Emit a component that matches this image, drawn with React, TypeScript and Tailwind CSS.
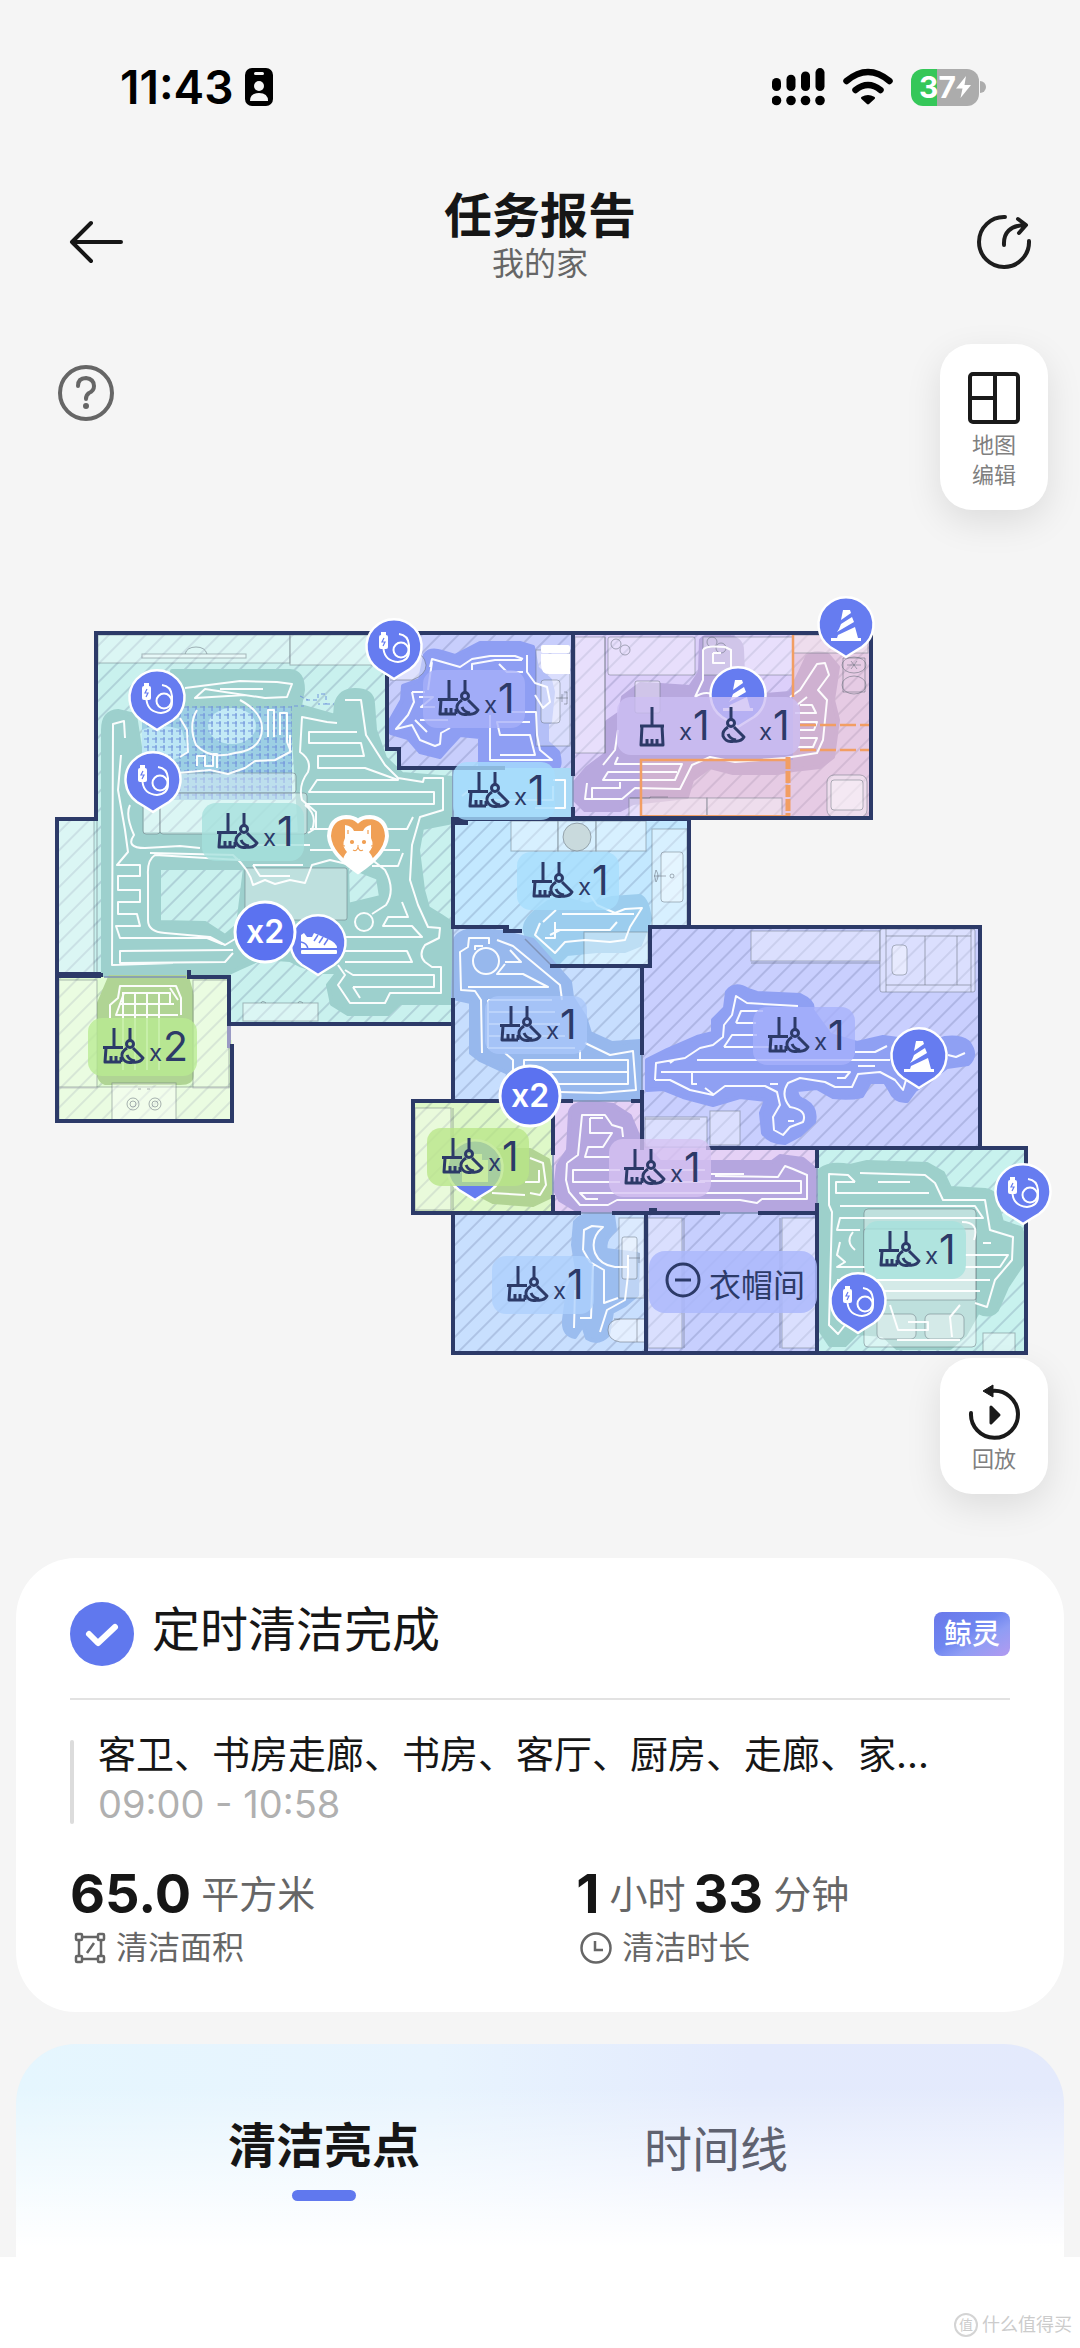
import type { ReactNode } from 'react'

const INK = '#2c3a68'

type Room = {
  id: string
  fill: string
  cover: string
  shape: string
  coverage?: string
  trail?: string
}

/* Floor plan geometry. All rooms share one coordinate space. */
const ROOMS: Room[] = [
  {
    id: 'living',
    fill: '#c9f1ee',
    cover: '#9dd0cd',
    shape: 'M96,633 H387 V749 H399 V768 H453 V1024 H230 V977 H57 V819 H96 Z',
    coverage:
      'M103,975 V730 Q103,712 118,711 L135,715 L142,760 V834 H300 L292,706 H172 V671 H290 Q303,672 303,690 L300,706 L335,716 L336,704 Q340,690 355,690 Q373,690 373,704 L375,730 L385,758 L402,774 L453,778 V822 L422,828 L418,850 L423,890 L428,908 L441,916 L453,924 V1003 H400 L388,1014 H348 L332,1004 L328,985 L338,972 L320,972 L300,965 L290,960 L262,958 L240,968 L225,975 Z M159,868 V922 L205,923 L225,936 L238,925 L245,868 Z M347,866 L378,878 L381,897 L348,905 Z',
    trail:
      'M337,723 L327,722 L302,717 L300,752 Q312,760 308,772 Q298,785 302,800 L316,812 V828 L308,833 M357,732 H309 V743 H361 L364,756 H318 V768 H365 L398,780 H317 L309,792 H434 V804 H305 M413,817 L407,829 H310 M345,700 H361 L366,735 L385,765 L398,778 L423,782 L424,778 H443 V810 L420,817 L412,845 L410,880 L418,905 L428,927 L440,928 L439,938 L425,945 Q418,955 425,962 L432,967 H441 V993 H390 L385,1003 L350,1003 L338,985 L345,975 L338,965 M403,853 L398,866 H372 M402,902 L408,917 H388 L383,926 H412 L422,937 H340 M345,951 H407 L412,962 H345 M345,970 L353,975 H434 V987 H353 M360,998 L353,987 M125,738 L124,721 L113,724 L112,965 L173,963 M121,755 L118,790 L125,830 L128,852 L117,865 H140 V876 H118 V890 H140 V902 H118 V914 L137,914 L140,926 L116,926 L120,938 H207 L222,944 M233,950 L120,951 V963 L225,962 L233,953 M240,860 L155,855 Q147,860 148,875 V920 Q148,932 165,933 L210,937 L225,945 L240,936 M150,853 L233,855 Q250,870 253,885 L265,880 L275,884 L290,880 L305,883 L312,865 L330,860 L355,866 M253,865 L260,876 H290 M253,865 H303 M370,858 L385,870 Q396,890 386,905 L372,914 M355,922 a9,9 0 1 0 18,0 a9,9 0 1 0 -18,0 M185,688 L240,681 L277,682 L292,684 L287,697 L265,698 L205,689 L195,698 L245,695 M220,689 H263 M240,700 Q262,712 262,728 Q262,750 235,753 Q210,760 196,745 Q188,725 197,710 M180,718 L187,730 L188,752 L180,757 M178,773 L210,770 L228,774 L245,768 L255,761 L275,760 L290,752 L290,735 M197,766 v-10 h8 v10 h8 v-12 h4 v14 M268,737 V710 H274 V737 M280,735 V713 H287 V742 L291,752 M130,805 Q125,815 134,835 Q125,848 145,848 L180,846 L200,848 M305,805 Q318,815 312,830 M310,850 H400 M240,845 H310',
  },
  {
    id: 'kitchen-green',
    fill: '#e0fbd2',
    cover: '#b0d494',
    shape: 'M57,977 H230 V1040 H232 V1121 H57 Z',
    coverage: 'M110,977 H187 L192,995 V1075 Q192,1083 180,1083 H105 Q98,1080 99,1070 V1003 Z',
    trail:
      'M110,1018 V1005 L118,998 L120,986 H176 L181,998 V1015 M124,993 L116,1015 H178 M122,993 H170 V1004 M120,1004 H174 M123,993 V1070 M135,993 V1070 M147,993 V1070 M159,993 V1070 M170,988 L178,1000',
  },
  {
    id: 'bath',
    fill: '#c8cefc',
    cover: '#8e9ef3',
    shape: 'M387,633 H573 V768 H399 V749 H387 Z',
    coverage:
      'M425,655 Q430,648 442,652 L455,656 L480,643 H520 L533,647 L537,668 L550,680 L553,692 L550,722 H547 V742 L558,752 Q562,768 556,768 H480 V737 L460,735 L448,748 L440,757 L420,752 L408,738 L391,733 L390,721 L402,700 L403,686 L420,680 Z',
    trail:
      'M430,667 L432,659 L460,667 L472,659 L490,656 H515 L523,659 M472,670 V664 L495,660 H522 M432,662 L428,690 M412,692 L414,702 L408,715 L396,729 L412,725 L420,740 L435,746 L440,744 L441,733 L450,728 M425,692 H412 M415,720 L427,732 M419,697 h14 l-12,10 h14 M490,715 V760 H552 L540,750 L537,735 L536,712 H510 M530,722 H497 L500,735 H530 L535,755 H500 M527,655 V672 L535,683 L547,687 L550,702 L543,708 L535,695 M523,672 h-16 l-8,-8 M420,720 h28',
  },
  {
    id: 'hall',
    fill: '#a9d9f6',
    cover: '#9ccfee',
    shape: 'M453,768 H573 V819 H453 Z',
    trail: 'M553,780 H565 V808 H535 M553,786 V800 H480 M462,796 l8,-6',
  },
  {
    id: 'study',
    fill: '#dccffa',
    cover: '#b8a8de',
    shape: 'M573,633 H871 V818 H573 Z',
    coverage:
      'M575,800 V782 L587,768 L607,753 V722 L620,713 L623,697 L640,684 L660,685 L690,687 L700,672 L701,640 Q705,634 725,636 Q742,638 742,650 L743,673 L765,695 L790,693 L800,672 L807,657 Q815,650 828,655 L838,667 L833,700 L838,720 L833,757 L820,767 L793,770 L777,773 H733 L710,767 L692,780 L687,797 L633,803 L620,810 H585 Z',
    trail:
      'M618,730 L615,750 L603,765 M618,757 L615,764 H682 L675,780 H603 L608,772 H677 M620,782 V788 H592 V799 H622 L635,788 L680,789 L692,765 L710,757 L735,762 L785,758 L817,753 L823,740 L827,700 L818,690 L829,675 L825,663 L817,664 L800,690 L790,697 M587,783 L585,799 H592 M797,705 L807,697 M800,705 H812 L816,713 H795 M800,722 H817 L814,730 H800 M800,738 H817 L813,747 H798 M695,697 L703,680 V650 Q705,645 725,647 L731,650 V668 M713,653 v10 h12 M713,653 h8 M695,697 Q705,690 715,695',
  },
  {
    id: 'balcony',
    fill: '#c3e8ff',
    cover: '#9ccdee',
    shape: 'M453,819 H689 V927 H650 V966 H552 L522,935 V931 H505 V927 H453 Z',
    coverage:
      'M527,936 Q520,925 535,912 L548,902 L562,898 L587,905 L612,898 L640,896 Q648,900 650,920 L640,945 L625,951 L597,951 L567,954 L557,964 L548,962 Z',
    trail:
      'M540,923 L535,935 L555,953 L565,942 L585,940 L610,942 L625,940 L630,927 L642,908 L625,909 L615,913 L597,905 L590,895 M562,914 H634 M556,930 H610 L617,922 M556,910 L543,922 M555,922 V938 h-10 M560,930 L550,935',
  },
  {
    id: 'corridor',
    fill: '#c7defe',
    cover: '#97b8ed',
    shape: 'M453,927 H505 V931 H522 V935 L552,966 H642 V1101 H453 Z',
    coverage:
      'M455,940 Q458,931 475,930 L503,932 L533,940 L555,965 L570,982 L572,997 L585,1017 L590,1033 L612,1043 L641,1041 V1099 H505 L508,1073 L480,1060 L471,1053 V1002 L453,998 Z',
    trail:
      'M489,944 V938 H469 L468,947 L460,952 L461,990 L475,991 L481,1000 L482,1053 M475,950 v-4 h8 M497,940 L513,946 L530,960 L560,985 L562,1000 M473,961 a13,13 0 1 0 26,0 a13,13 0 1 0 -26,0 M510,950 L521,962 H505 M505,964 L497,974 H523 L548,987 H468 M585,1043 L610,1055 L633,1051 L636,1090 L612,1092 L600,1093 L560,1092 M524,1068 V1060 H628 V1084 H555 M524,1072 H628 M580,1050 V1060 M505,1053 L513,1060 V1070 M488,1000 H552 M488,1012 H555 M488,1024 H560 M488,1036 H565 M488,1048 H575 M488,1000 V1048',
  },
  {
    id: 'bedroom',
    fill: '#c9cffe',
    cover: '#8fa0f3',
    shape: 'M650,927 H980 V1148 H642 V966 H650 Z',
    coverage:
      'M647,1060 L667,1050 L697,1037 L713,1033 V1020 L725,1008 L727,992 Q735,982 748,990 L757,993 L800,995 Q815,1002 812,1010 L830,1035 L857,1043 L883,1037 L930,1043 L945,1038 Q960,1036 968,1042 Q978,1055 968,1064 L947,1067 L930,1080 L915,1090 L907,1101 Q895,1102 890,1090 L885,1082 H870 L862,1096 Q850,1099 833,1097 L817,1088 L797,1090 Q795,1098 805,1101 Q817,1108 814,1122 L800,1135 L785,1143 Q770,1143 763,1133 L761,1113 L766,1100 L740,1097 L713,1105 L683,1097 L663,1089 L647,1090 Z',
    trail:
      'M655,1080 L656,1063 L685,1058 L700,1048 L713,1045 L723,1037 L724,1025 L732,1015 L736,996 L747,1003 L798,1006 M655,1080 H670 L690,1090 L713,1095 L725,1086 L765,1086 L777,1092 L780,1105 L773,1117 L774,1130 L783,1135 L790,1127 L803,1122 Q808,1110 790,1107 Q780,1095 788,1083 L800,1078 L825,1082 L835,1087 L852,1087 L858,1074 L880,1072 L895,1080 L903,1090 L906,1080 M661,1072 H850 L845,1078 h-8 M697,1060 H890 M692,1073 V1084 h5 M705,1088 l8,6 M736,1023 l5,-12 h22 M736,1023 h20 M724,1047 l8,-12 h25 M724,1047 h50 M855,1052 h20 l12,-6 M858,1066 h17 M948,1055 l8,2 l9,-4 M770,1084 h8 M788,1121 h6 M670,1063 l4,-3',
  },
  {
    id: 'guest-bath',
    fill: '#def8c8',
    cover: '#b2d494',
    shape: 'M413,1101 H553 V1213 H413 Z',
    coverage: 'M480,1150 H530 L548,1160 L552,1180 V1196 L533,1205 L493,1202 L470,1190 Z',
    trail: 'M530,1158 L543,1163 L546,1185 L540,1195 L530,1193 M539,1170 V1182 H525 M492,1193 L525,1195',
  },
  {
    id: 'aisle',
    fill: '#e5d1f6',
    cover: '#b5a6df',
    shape: 'M553,1101 H642 V1148 H817 V1213 H553 Z',
    coverage:
      'M570,1112 Q572,1103 590,1102 L613,1105 L630,1116 L640,1140 L660,1162 H772 L780,1156 L803,1159 L814,1168 V1212 H580 L560,1200 L555,1190 L558,1165 L568,1150 Z',
    trail:
      'M567,1163 L578,1155 L582,1115 H605 L612,1125 L622,1128 L623,1137 M567,1163 L566,1180 L569,1192 L580,1205 H608 L617,1200 H740 L757,1203 L762,1199 H807 V1175 L793,1169 L785,1166 L778,1177 L715,1176 M590,1118 V1133 H603 L612,1133 L603,1147 H588 L585,1157 H610 M590,1118 H603 M620,1170 H573 V1182 H620 M700,1181 H801 V1193 H580 L586,1199 h12 M711,1174 h33 M640,1182 H705 M640,1170 H705',
  },
  {
    id: 'main-bath',
    fill: '#c8dffe',
    cover: '#9bbdef',
    shape: 'M453,1213 H646 V1353 H453 Z',
    coverage:
      'M575,1222 Q580,1215 590,1215 H613 L615,1230 Q603,1240 606,1250 L638,1254 L637,1295 L625,1305 L612,1312 L608,1335 Q598,1345 587,1338 L583,1325 L575,1337 Q563,1335 564,1320 L568,1290 L577,1270 L573,1245 Z',
    trail:
      'M583,1250 L584,1230 L592,1226 L603,1227 Q590,1238 595,1253 Q600,1265 615,1267 H628 M583,1250 L590,1262 L604,1270 V1303 L618,1298 M628,1255 V1275 L625,1300 L607,1310 L600,1332 M575,1290 L574,1328 M580,1318 h11 l2,-55',
  },
  {
    id: 'closet',
    fill: '#c7cffe',
    cover: '#8fa0f3',
    shape: 'M646,1213 H817 V1353 H646 Z',
  },
  {
    id: 'master',
    fill: '#c8f2ee',
    cover: '#9dd0cb',
    shape: 'M817,1148 H1026 V1353 H817 Z',
    coverage:
      'M820,1170 Q830,1162 850,1166 L867,1162 L927,1164 L943,1173 L950,1188 L985,1190 Q998,1192 998,1208 L1002,1222 L1020,1228 Q1026,1235 1023,1263 L1007,1287 L997,1310 Q990,1318 978,1312 L965,1335 L950,1348 H897 L883,1335 L857,1333 L845,1345 H830 L820,1330 Z',
    trail:
      'M855,1182 L848,1175 L829,1174 V1205 L832,1212 L829,1325 L838,1334 L845,1325 M860,1173 L925,1175 L935,1183 L943,1200 L985,1200 L990,1230 L1013,1237 L1012,1260 L995,1280 L987,1307 L975,1303 M855,1182 H836 V1193 H929 M878,1182 H910 M840,1206 H975 L983,1218 H840 L837,1230 H860 M840,1242 L837,1255 L845,1262 L837,1267 H865 M983,1243 h8 M965,1255 H1008 L1000,1267 H965 M837,1280 H990 M880,1291 H980 M853,1232 q-8,10 2,18 M962,1222 q18,0 12,18 M890,1305 l8,25 h30 v-8 h-20 M960,1305 l-10,12 2,20 M897,1340 H960',
  },
]

/* Furniture outlines: x, y, width, height, radius */
const FURNITURE: [number, number, number, number, number][] = [
  [98, 635, 192, 28, 0],
  [290, 635, 96, 30, 0],
  [142, 654, 104, 4, 0],
  [57, 820, 37, 153, 0],
  [143, 773, 153, 20, 3],
  [143, 793, 17, 41, 3],
  [160, 793, 147, 41, 3],
  [245, 868, 102, 52, 2],
  [243, 1003, 75, 18, 0],
  [59, 980, 38, 108, 0],
  [193, 980, 36, 108, 0],
  [59, 1087, 172, 33, 0],
  [112, 1083, 64, 37, 0],
  [536, 650, 34, 96, 0],
  [541, 680, 19, 43, 3],
  [575, 637, 30, 116, 0],
  [608, 637, 87, 38, 2],
  [703, 637, 90, 38, 0],
  [635, 681, 25, 32, 2],
  [629, 798, 78, 19, 0],
  [707, 798, 75, 19, 0],
  [793, 635, 75, 18, 0],
  [827, 775, 40, 42, 7],
  [831, 780, 32, 30, 3],
  [511, 821, 47, 30, 0],
  [558, 821, 38, 30, 0],
  [596, 821, 50, 30, 0],
  [652, 829, 35, 97, 0],
  [661, 852, 22, 50, 3],
  [584, 932, 64, 33, 0],
  [751, 931, 129, 30, 0],
  [880, 929, 95, 63, 2],
  [892, 945, 15, 30, 4],
  [645, 1117, 62, 30, 0],
  [710, 1111, 30, 34, 0],
  [415, 1108, 36, 102, 0],
  [619, 1218, 25, 80, 0],
  [622, 1237, 15, 42, 2],
  [648, 1218, 34, 130, 0],
  [782, 1218, 34, 130, 0],
  [864, 1209, 112, 138, 4],
  [864, 1229, 112, 71, 2],
  [877, 1314, 39, 25, 5],
  [925, 1314, 39, 25, 5],
  [983, 1333, 32, 19, 0],
]

const WALLS =
  'M96,633 H871 V818 H573 M96,633 V819 H57 V1121 H232 V1046 M229,1022 V977 H189 V972 M57,975 H101 M229,1024 H453 M387,677 V749 H399 V768 H453 M453,768 H503 M453,819 V927 M453,1000 V1101 M453,819 H573 M573,633 V774 M573,809 V818 M573,819 H689 V927 M453,927 H507 M505,931 H520 M552,966 H650 V927 H980 V1148 M642,966 V1053 M642,1092 V1148 M413,1101 H571 M633,1101 H642 M413,1101 V1213 H579 M553,1110 V1153 M553,1197 V1213 M614,1213 H718 M760,1213 H817 M708,1148 H1026 V1353 H453 V1213 M646,1213 V1353 M817,1148 V1166 M817,1205 V1353'

const DOORS =
  'M525,939 L552,966 M453,768 V819 M453,927 V1000 M573,774 V809 M642,1053 V1092 M571,1101 H633 M553,1153 V1197 M579,1213 H614 M718,1213 H760 M817,1166 V1205 M104,977 H186'

type LabelKind = 'both' | 'split'
type MapLabel = { x: number; y: number; count: number; fill: string; kind?: LabelKind }

const LABELS: MapLabel[] = [
  { x: 202, y: 803, count: 1, fill: '#a5e0dc' },
  { x: 88, y: 1018, count: 2, fill: '#b9ea92' },
  { x: 423, y: 670, count: 1, fill: '#a6aff8' },
  { x: 453, y: 762, count: 1, fill: '#a6dcfc' },
  { x: 617, y: 697, count: 1, fill: '#cdbff3', kind: 'split' },
  { x: 517, y: 852, count: 1, fill: '#a6defd' },
  { x: 485, y: 996, count: 1, fill: '#a9c6fa' },
  { x: 753, y: 1007, count: 1, fill: '#a6b1fb' },
  { x: 609, y: 1139, count: 1, fill: '#d6c3f2' },
  { x: 427, y: 1128, count: 1, fill: '#b8e688' },
  { x: 492, y: 1256, count: 1, fill: '#add0fd' },
  { x: 864, y: 1221, count: 1, fill: '#a5e2dd' },
]

type PinKind = 'cable' | 'cone' | 'shoe' | 'scale'
type MapPin = { x: number; y: number; kind: PinKind }

// Pins that sit beneath a room label
const BURIED_PINS: MapPin[] = [
  { x: 738, y: 695, kind: 'cone' },
  { x: 475, y: 1168, kind: 'scale' },
]

const PINS: MapPin[] = [
  { x: 157, y: 698, kind: 'cable' },
  { x: 153, y: 780, kind: 'cable' },
  { x: 394, y: 647, kind: 'cable' },
  { x: 846, y: 625, kind: 'cone' },
  { x: 318, y: 943, kind: 'shoe' },
  { x: 919, y: 1056, kind: 'cone' },
  { x: 1023, y: 1192, kind: 'cable' },
  { x: 858, y: 1301, kind: 'cable' },
]

export default function App() {
  return (
    <div className="w-full bg-white font-['Inter','Noto_Sans_CJK_SC',sans-serif] text-[#161616]">
      <div className="bg-[#f5f5f5]">
        <StatusBar />
        <Header />
        <MapSection />
        <main className="flex flex-col gap-8 px-4 pt-16">
          <SummaryCard />
          <HighlightsCard />
        </main>
      </div>
      <footer className="flex items-center justify-end gap-1 px-2 pt-14 pb-4 text-[#cccccc]">
        <span className="flex size-6 items-center justify-center rounded-full border-2 border-[#d4d4d4] text-sm leading-none">值</span>
        <span className="text-lg leading-6">什么值得买</span>
      </footer>
    </div>
  )
}

function StatusBar() {
  return (
    <div className="flex h-[174px] items-center justify-between pr-[94px] pl-[120px] text-black">
      <div className="flex items-center gap-3">
        <span className="text-[46px] leading-none font-semibold">11:43</span>
        <svg width="28" height="38" viewBox="0 0 28 38">
          <rect width="28" height="38" rx="7" fill="#000" />
          <rect x="9" y="4" width="10" height="3" rx="1.5" fill="#f5f5f5" />
          <circle cx="14" cy="18" r="5" fill="#f5f5f5" />
          <path d="M5,33 Q5,25 14,25 Q23,25 23,33 Z" fill="#f5f5f5" />
        </svg>
      </div>
      <div className="flex items-center gap-[18px]">
        <svg width="53" height="38" viewBox="0 0 53 38">
          {[0, 1, 2, 3].map((i) => (
            <g key={i}>
              <rect x={i * 14.5} y={10 - i * 3.3} width="9" height={13 + i * 3.3} rx="4.5" />
              <circle cx={i * 14.5 + 4.5} cy="32.5" r="4.8" />
            </g>
          ))}
        </svg>
        <svg width="50" height="38" viewBox="0 0 50 38" fill="none" stroke="#000" strokeLinecap="round">
          <path d="M3.5,13 Q25,-5 46.5,13" strokeWidth="6.5" />
          <path d="M12.5,22 Q25,12 37.5,22" strokeWidth="6.5" />
          <path d="M19.5,30 Q25,27 30.5,30 L25,35 Z" fill="#000" strokeWidth="3" strokeLinejoin="round" />
        </svg>
        <div className="flex items-center gap-px">
          <div className="flex h-[37px] w-[68px] items-center justify-center rounded-xl bg-[linear-gradient(90deg,#35c759_38%,#acacac_38%)] text-white">
            <span className="text-3xl leading-none font-bold">37</span>
            <svg width="15" height="22" viewBox="0 0 15 22">
              <path d="M10,0 L0,12.5 H6.5 L4.5,22 L15,9 H8.5 Z" fill="#fff" />
            </svg>
          </div>
          <div className="h-3 w-1.5 rounded-r-full bg-[#acacac]" />
        </div>
      </div>
    </div>
  )
}

function Header() {
  return (
    <header className="grid h-[136px] grid-cols-[1fr_auto_1fr] items-center px-12">
      <button type="button" aria-label="返回" className="justify-self-start pl-5">
        <svg width="56" height="44" viewBox="0 0 56 44" fill="none" stroke="#161616" strokeWidth="4" strokeLinecap="round" strokeLinejoin="round">
          <path d="M23,3 L4,22 L23,41 M4,22 H53" />
        </svg>
      </button>
      <div className="flex flex-col items-center pb-3 text-center">
        <h1 className="text-5xl leading-[56px] font-bold">任务报告</h1>
        <p className="text-[32px] leading-10 text-[#666]">我的家</p>
      </div>
      <button type="button" aria-label="分享" className="justify-self-end">
        <svg width="56" height="56" viewBox="0 0 56 56" fill="none" stroke="#1d1d1d" strokeWidth="4" strokeLinecap="round" strokeLinejoin="round">
          <path d="M29,3 A25,25 0 1 0 53,27" />
          <path d="M28,31 Q27,12 49,11 M42,5 L50,11 L43,19" />
        </svg>
      </button>
    </header>
  )
}

function MapSection() {
  return (
    <section className="pt-[34px]">
      <div className="flex items-start justify-between pr-8 pl-14">
        <button type="button" aria-label="帮助" className="mt-5">
          <svg width="60" height="60" viewBox="0 0 60 60" fill="none" stroke="#666" strokeLinecap="round">
            <circle cx="30" cy="29" r="26" strokeWidth="4" />
            <path d="M22,22 Q22,14 30,14 Q38,15 38,22 Q38,27 33,29 Q30,31 30,35" strokeWidth="4" />
            <circle cx="30" cy="42" r="3" fill="#666" stroke="none" />
          </svg>
        </button>
        <FloatingButton label="地图编辑">
          <svg width="52" height="52" viewBox="0 0 52 52" fill="none" stroke="#1a1a1a" strokeWidth="4">
            <rect x="2" y="2" width="48" height="48" rx="3" />
            <path d="M27,2 V50 M2,26 H27" />
          </svg>
        </FloatingButton>
      </div>
      <FloorPlan />
      <div className="flex justify-end pr-8">
        <FloatingButton label="回放">
          <svg width="52" height="52" viewBox="0 2 52 52" fill="none" stroke="#1a1a1a" className="overflow-visible">
            <path d="M3,29 A23.5,23.5 0 1 0 24,7" strokeWidth="4" strokeLinecap="round" />
            <path d="M15,7 L25,1 V13 Z" fill="#1a1a1a" strokeWidth="1" strokeLinejoin="round" />
            <path d="M23,23 L31,31 L23,39 Z" fill="#1a1a1a" strokeWidth="3" strokeLinejoin="round" />
          </svg>
        </FloatingButton>
      </div>
    </section>
  )
}

function FloatingButton({ label, children }: { label: string; children: ReactNode }) {
  return (
    <button
      type="button"
      className="flex w-[108px] flex-col items-center gap-1.5 rounded-[32px] bg-white px-8 pt-7 pb-5 shadow-[0_12px_36px_rgba(0,0,0,0.1)]"
    >
      {children}
      <span className="w-11 text-[22px] leading-[30px] text-[#808080]">{label}</span>
    </button>
  )
}

// ── Floor plan ─────────────────────────────────────────────────────────────

function FloorPlan() {
  return (
    <svg viewBox="0 510 1080 848" className="block w-full" role="img" aria-label="清洁地图">
      <defs>
        <pattern id="hatch" width="13" height="13" patternUnits="userSpaceOnUse" patternTransform="rotate(45)">
          <path d="M6,0 V13" stroke={INK} strokeOpacity="0.26" strokeWidth="1.3" />
        </pattern>
        <pattern id="rug" width="8" height="8" patternUnits="userSpaceOnUse">
          <path d="M0,3 H5 M4,1 V7" stroke="#7396dc" strokeWidth="1.2" fill="none" />
        </pattern>
      </defs>

      {ROOMS.map((room) => (
        <g key={room.id}>
          <path d={room.shape} fill={room.fill} />
          {room.id !== 'hall' && <path d={room.shape} fill="url(#hatch)" />}
          {room.id === 'living' && <path d="M142,706 H292 V800 H142 Z" fill="#9ccfe4" />}
          {room.coverage && (
            <path d={room.coverage} fill={room.cover} fillRule="evenodd" stroke={room.cover} strokeWidth="4" strokeLinejoin="round" />
          )}
        </g>
      ))}

      {/* carpet */}
      <path d="M142,730 Q160,722 182,730 L188,752 L170,762 H142 Z" fill="#bce6f5" />
      <ellipse cx="232" cy="726" rx="24" ry="18" fill="#c3eaf6" />
      <path d="M142,706 H292 V800 H142 Z" fill="url(#rug)" />
      <path d="M300,696 l8,4 M306,700 h12 v-6 h8 v10 h-8 M326,704 h8 M294,706 h10" stroke="#7396dc" fill="none" strokeDasharray="4 3" />

      {/* restricted zones */}
      <path d="M793,635 H869 V816 H788 V760 H793 Z M641,760 H788 V816 H641 Z" fill="#f9c4bb" fillOpacity="0.35" />

      {FURNITURE.map(([x, y, w, h, r]) => (
        <rect key={`${x}-${y}`} x={x} y={y} width={w} height={h} rx={r} fill="#fff" fillOpacity="0.34" stroke="#5c6672" strokeOpacity="0.45" />
      ))}
      <FurnitureDetails />

      {ROOMS.map((room) => (
        <path key={room.id} d={room.trail} fill="none" stroke="#fff" strokeOpacity="0.95" strokeWidth="2" strokeLinejoin="round" />
      ))}

      <g fill="none" stroke="#f29e63" strokeWidth="2.5">
        <path d="M793,635 V697" />
        <path d="M800,725 H869 M800,750 H869" strokeDasharray="16 4" />
        <path d="M641,816 V760 H786" />
        <path d="M641,816 H788" strokeWidth="2" />
        <path d="M788,757 V816" strokeWidth="5" strokeDasharray="12 2" />
      </g>

      <path d={DOORS} fill="none" stroke="#7f93b8" strokeWidth="1.5" />
      <path d="M229,1020 V1048" stroke="#9a9ac4" strokeWidth="4" />
      <path d={WALLS} fill="none" stroke={INK} strokeWidth="4" strokeLinecap="square" />
      <path d="M57,975 H101 M453,822 H468" stroke={INK} strokeWidth="6" />
      <rect x="649" y="1208" width="8" height="6" fill={INK} />

      {BURIED_PINS.map((pin) => (
        <Pin key={`${pin.x}-${pin.y}`} {...pin} />
      ))}
      {LABELS.map((label) => (
        <CountLabel key={`${label.x}-${label.y}`} {...label} />
      ))}

      {/* skipped room */}
      <rect x="649" y="1251" width="168" height="62" rx="16" fill="#acb8fb" fillOpacity="0.85" />
      <circle cx="683" cy="1280" r="16" fill="none" stroke={INK} strokeWidth="3" />
      <path d="M675,1280 H691" stroke={INK} strokeWidth="3" />
      <text x="709" y="1297" fontSize="32" fill={INK}>衣帽间</text>

      {PINS.map((pin) => (
        <Pin key={`${pin.x}-${pin.y}`} {...pin} />
      ))}
      <CatPin x={358} y={840} />
      <RepeatBadge x={265} y={932} />
      <RepeatBadge x={530} y={1096} />
    </svg>
  )
}

function FurnitureDetails() {
  return (
    <g fill="none" stroke="#5c6672" strokeOpacity="0.5">
      <path d="M185,654 q2,-7 11,-7 q9,0 11,7" />
      <circle cx="133" cy="1104" r="6" />
      <circle cx="155" cy="1104" r="6" />
      <circle cx="133" cy="1104" r="3" />
      <circle cx="155" cy="1104" r="3" />
      <path d="M138,1089 h3 M147,1089 h3 M261,1003 q1,-3 5,0 M298,1003 q1,-3 5,0" />
      {/* toilets and basins */}
      <rect x="541" y="645" width="29" height="8" rx="2" fill="#fff" stroke="none" />
      <path d="M541,654 H570 V674 H549 Q541,674 541,664 Z" fill="#fff" stroke="none" />
      <path d="M556,698 h12 M562,694 v8 M564,692 h3 v12 h-3" />
      <path d="M654,876 h12 M656,870 q4,6 0,12 q-3,-6 0,-12" />
      <circle cx="672" cy="876" r="2" />
      <path d="M628,1258 h12 M639,1253 v10" />
      <path d="M614,1319 H646 V1342 H620 Q608,1340 608,1330 Q608,1320 620,1319 M637,1319 V1342" fill="#fff" fillOpacity="0.5" />
      <circle cx="577" cy="837" r="14" fill="#c9dadd" />
      {/* stools and chairs */}
      <circle cx="616" cy="644" r="5" />
      <circle cx="625" cy="650" r="5" />
      <circle cx="712" cy="642" r="5" />
      <circle cx="721" cy="648" r="5" />
      <ellipse cx="854" cy="665" rx="12" ry="8" />
      <ellipse cx="854" cy="685" rx="12" ry="9" />
      <path d="M843,658 h22 v34 h-22 Z M847,665 h14 M851,661 l6,8 M857,661 l-6,8" />
      <path d="M605,637 V753 M630,798 h20 v-1 h18 M886,929 V992 M971,929 V992 M886,936 H971 M886,985 H971 M925,936 V985 M957,936 V985" />
      <path d="M453,1108 V1210 M684,1218 V1348 M780,1218 V1348 M751,963 H880 M645,1119 H700 M97,820 V973" />
      <path d="M390,680 h22 q14,-5 14,-15 q-2,-12 -12,-12" fill="#fff" fillOpacity="0.4" />
    </g>
  )
}

function CountLabel({ x, y, count, fill, kind = 'both' }: MapLabel) {
  if (kind === 'split') {
    return (
      <g transform={`translate(${x} ${y})`}>
        <rect width="183" height="58" rx="14" fill={fill} fillOpacity="0.78" />
        <g transform="translate(22 10)" fill="none" stroke={INK} strokeWidth="3" strokeLinejoin="round">
          <path d="M13,0 V19 M1,19 H25 M3,19 L2,38 H24 L23,19 M8,38 V32 M13,38 V32 M18,38 V32" />
        </g>
        <Times x={62} count={count} />
        <g transform="translate(87 10)">
          <Duster />
        </g>
        <Times x={142} count={count} />
      </g>
    )
  }
  return (
    <g transform={`translate(${x} ${y})`}>
      <rect width={count > 1 ? 109 : 102} height="58" rx="14" fill={fill} fillOpacity="0.78" />
      <g transform="translate(15 10)">
        <path d="M11,0 V19 M0,19.5 H20 M3,20 L2,34 H18 M8,34 V28 M13,34 V28 M18,34 V29" fill="none" stroke={INK} strokeWidth="3" strokeLinejoin="round" />
        <Duster />
      </g>
      <Times x={61} count={count} />
    </g>
  )
}

/* Mop head, shares its origin with the broom it stands beside */
function Duster() {
  return (
    <g fill="none" stroke={INK} strokeWidth="3" strokeLinejoin="round">
      <path d="M27,0 V12" />
      <circle cx="27" cy="16" r="3.5" />
      <path d="M24,20 Q18,24 19,29 Q22,36 30,34 Q37,35 40,30 L30,20 M24,27 Q26,32 32,33" />
    </g>
  )
}

function Times({ x, count }: { x: number; count: number }) {
  return (
    <g fill={INK}>
      <text x={x} y="43" fontSize="24">x</text>
      <text x={x + 14} y="43" fontSize="41">{count}</text>
    </g>
  )
}

function Pin({ x, y, kind }: MapPin) {
  return (
    <g transform={`translate(${x} ${y})`}>
      <path
        d="M0,32 Q-6,28 -16,22 A27.5,27.5 0 1 1 16,22 Q6,28 0,32 Z"
        fill="#667cf0"
        stroke="#fff"
        strokeWidth="2.5"
        strokeLinejoin="round"
      />
      <PinGlyph kind={kind} />
    </g>
  )
}

function PinGlyph({ kind }: { kind: PinKind }) {
  if (kind === 'cable') {
    return (
      <g fill="none" stroke="#fff" strokeWidth="2">
        <rect x="-15" y="-12" width="9" height="14" rx="2" fill="#fff" stroke="none" />
        <rect x="-13" y="-15" width="5" height="4" fill="#fff" stroke="none" />
        <path d="M-10,-9 l-2,4 h3 l-2,4" stroke="#667cf0" strokeWidth="1.2" />
        <path d="M-10.5,2 Q-9,14 4,15 Q15,14 15,4 V-2 Q14,-12 5,-13" />
        <circle cx="7" cy="3" r="7.5" />
      </g>
    )
  }
  if (kind === 'cone') {
    return (
      <g fill="#fff">
        <path d="M-15,13 H-9 L-8,10 L9,2 L12,13 H15 V16 H-15 Z" />
        <path d="M-7,4 L-5,-1 L6,-8 L8,-3 L-9,7 Z" />
        <path d="M-3,-15 H4 L5,-12 L-5,-5 Z" />
      </g>
    )
  }
  if (kind === 'shoe') {
    return (
      <g fill="#fff">
        <path d="M-17,-8 L-14,-10 L-11,-6 H-6 L-4,-10 L10,-4 Q19,0 19,5 H-17 Z" />
        <rect x="-17" y="7" width="36" height="4" rx="1" />
        <path d="M0,-8 l-4,6 M5,-6 l-4,6 M10,-4 l-4,6" stroke="#667cf0" strokeWidth="1.5" />
        <path d="M-17,-1 q6,1 7,7" stroke="#667cf0" strokeWidth="1.5" fill="none" />
      </g>
    )
  }
  return <path d="M-13,-8 H-7 V-14 H7 V-8 H13 V14 H-13 Z" fill="#fff" />
}

function CatPin({ x, y }: { x: number; y: number }) {
  return (
    <g transform={`translate(${x} ${y})`}>
      <path
        d="M0,32 Q-28,14 -29,-4 Q-28,-22 -12,-23 Q-4,-23 0,-19 Q4,-23 12,-23 Q28,-22 29,-4 Q28,14 0,32 Z"
        fill="#f0a055"
        stroke="#fff"
        strokeWidth="4"
      />
      <path d="M-13,-2 V-15 Q-6,-14 -4,-9 H5 Q7,-14 13,-15 V-2 Q17,6 11,12 Q16,18 15,22 L0,31 L-15,22 Q-15,16 -11,12 Q-17,6 -13,-2 Z" fill="#fff" />
      <g stroke="#f0a055" fill="#f0a055" strokeWidth="1.2">
        <circle cx="-6" cy="2" r="1.5" />
        <circle cx="6" cy="2" r="1.5" />
        <path d="M-5,10 Q-1,12 0,7 Q1,12 5,10" fill="none" />
        <path d="M-1,6 H1 M-20,5 L-13,6 M-19,11 L-13,9 M20,5 L13,6 M19,11 L13,9 M-10,-10 v4 M10,-10 v4" />
      </g>
    </g>
  )
}

function RepeatBadge({ x, y }: { x: number; y: number }) {
  return (
    <g transform={`translate(${x} ${y})`}>
      <circle r="30" fill="#5b72f0" stroke="#fff" strokeWidth="3" />
      <text y="11" textAnchor="middle" fontSize="32" fontWeight="600" fill="#fff">x2</text>
    </g>
  )
}

// ── Cards ──────────────────────────────────────────────────────────────────

function SummaryCard() {
  return (
    <section className="rounded-[60px] bg-white px-[54px] py-11">
      <div className="flex items-center border-b-2 border-[#e2e2e2] pb-8">
        <svg width="64" height="64" viewBox="0 0 64 64">
          <circle cx="32" cy="32" r="32" fill="#6078ee" />
          <path d="M19,32 L28,41 L45,25" fill="none" stroke="#fff" strokeWidth="6" strokeLinecap="round" strokeLinejoin="round" />
        </svg>
        <h2 className="ml-[18px] flex-1 pb-2 text-5xl leading-[56px] font-normal">定时清洁完成</h2>
        <span className="rounded-lg bg-[linear-gradient(150deg,#6a78ea_0%,#6f86f0_45%,#8f9df4_65%,#b29af0_100%)] px-2.5 py-1 text-[28px] leading-9 font-medium text-white">
          鲸灵
        </span>
      </div>
      <div className="mt-8 flex gap-6">
        <div className="mt-2 w-1 rounded-full bg-[#dcdcdc]" />
        <div className="min-w-0 flex-1">
          <p className="truncate text-[38px] leading-[44px]">客卫、书房走廊、书房、客厅、厨房、走廊、家...</p>
          <p className="mt-2 text-[38px] leading-10 text-[#b0b0b0]">09:00 - 10:58</p>
        </div>
      </div>
      <dl className="mt-10 grid grid-cols-[7fr_6fr]">
        <Metric label="清洁面积" parts={[['65.0', '平方米']]}>
          <svg width="32" height="32" viewBox="0 0 32 32" fill="none" stroke="#666" strokeWidth="2.5">
            <path d="M9,5 H23 M9,27 H23 M5,9 V23 M27,9 V23 M13,21 L20,11" />
            <rect x="2" y="2" width="6" height="6" rx="1" />
            <rect x="24" y="2" width="6" height="6" rx="1" />
            <rect x="2" y="24" width="6" height="6" rx="1" />
            <rect x="24" y="24" width="6" height="6" rx="1" />
          </svg>
        </Metric>
        <Metric label="清洁时长" parts={[['1', '小时'], ['33', '分钟']]}>
          <svg width="32" height="32" viewBox="0 0 32 32" fill="none" stroke="#666" strokeWidth="2.5">
            <circle cx="16" cy="16" r="14.5" />
            <path d="M15,9 V18 H23" />
          </svg>
        </Metric>
      </dl>
    </section>
  )
}

function Metric({ label, parts, children }: { label: string; parts: [string, string][]; children: ReactNode }) {
  return (
    <div className="flex flex-col-reverse gap-1">
      <dt className="flex items-center gap-2.5 px-1 text-[32px] leading-10 text-[#666]">
        {children}
        {label}
      </dt>
      <dd className="flex items-center gap-2 text-[#666]">
        {parts.map(([value, unit]) => (
          <span key={unit} className="flex items-center gap-2.5">
            <span className="text-[54px] leading-[60px] font-bold text-[#161616]">{value}</span>
            <span className="text-[38px] leading-[60px]">{unit}</span>
          </span>
        ))}
      </dd>
    </div>
  )
}

function HighlightsCard() {
  return (
    <section className="rounded-t-[60px] bg-[linear-gradient(180deg,transparent_20%,#fff_95%),linear-gradient(90deg,#e5f6fe_0%,#e8f4fe_40%,#e3eafd_70%,#e4eafc_100%)] pt-[70px] pr-[152px] pb-14 pl-28">
      <div role="tablist" className="grid grid-cols-2">
        <button type="button" role="tab" aria-selected="true" className="flex flex-col items-center gap-3">
          <span className="text-5xl leading-[64px] font-bold">清洁亮点</span>
          <span className="h-[11px] w-16 rounded-md bg-[#6078ee]" />
        </button>
        <button type="button" role="tab" aria-selected="false" className="flex items-start justify-center pt-1">
          <span className="text-5xl leading-[64px] text-[#5f6270]">时间线</span>
        </button>
      </div>
    </section>
  )
}
